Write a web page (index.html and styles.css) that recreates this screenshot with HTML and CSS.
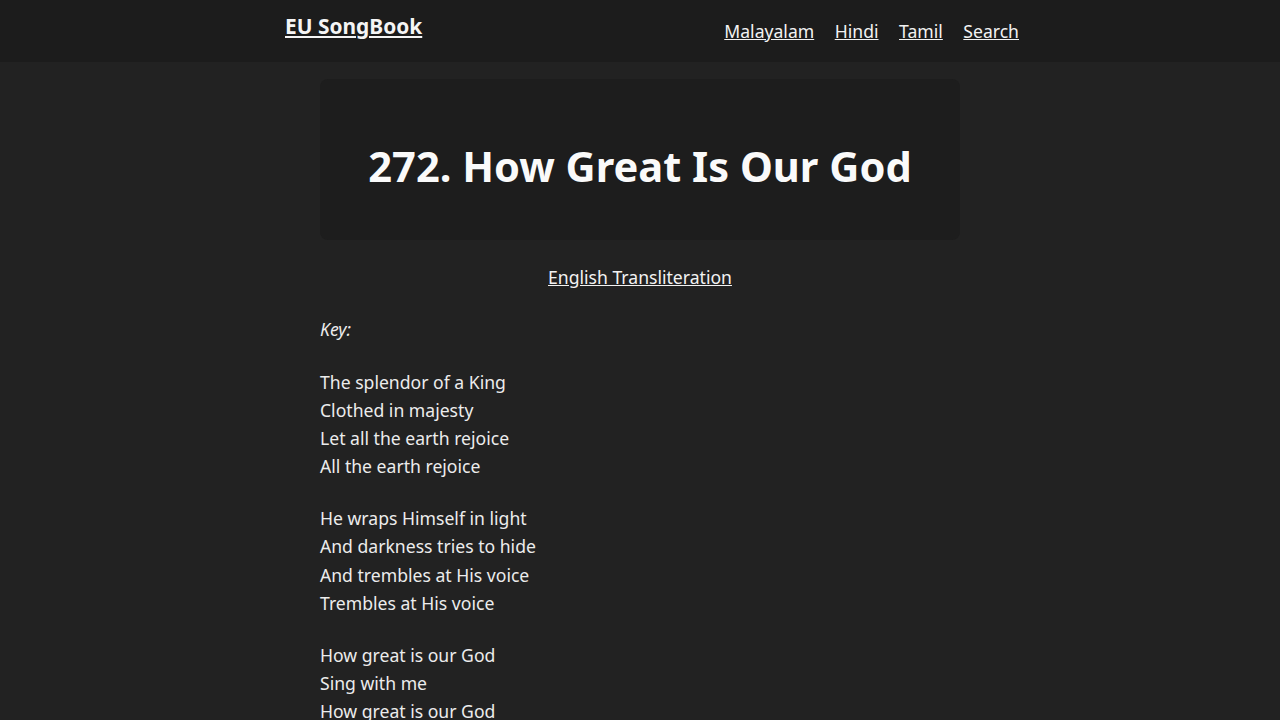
FILE: index.html
```html
<!DOCTYPE html>
<html lang="en">
<head>
<meta charset="utf-8">
<title>272. How Great Is Our God - EU SongBook</title>
<link rel="stylesheet" href="styles.css">
</head>
<body>
<header class="site-header">
  <div class="header-inner">
    <a class="brand" href="#">EU SongBook</a>
    <nav class="nav">
      <a href="#">Malayalam</a>
      <a href="#">Hindi</a>
      <a href="#">Tamil</a>
      <a href="#">Search</a>
    </nav>
  </div>
</header>
<main class="content">
  <div class="title-card">
    <h1>272. How Great Is Our God</h1>
  </div>
  <p class="translit"><a href="#">English Transliteration</a></p>
  <p class="key"><em>Key:</em></p>
  <p class="stanza">The splendor of a King<br>Clothed in majesty<br>Let all the earth rejoice<br>All the earth rejoice</p>
  <p class="stanza">He wraps Himself in light<br>And darkness tries to hide<br>And trembles at His voice<br>Trembles at His voice</p>
  <p class="stanza">How great is our God<br>Sing with me<br>How great is our God<br>And all will see<br>How great, how great<br>Is our God</p>
</main>
</body>
</html>
```
FILE: styles.css
```css
html, body {
  margin: 0;
  padding: 0;
}
body {
  background: #222222;
  color: #ececec;
  font-family: "Noto Sans", "Open Sans", sans-serif;
  font-size: 17.6px;
  line-height: 28.16px;
}
a {
  color: #f2f2f2;
}
.site-header {
  background: #1c1c1c;
  height: 62px;
}
.header-inner {
  width: 734px;
  margin: 0 0 0 285px;
  display: flex;
  justify-content: space-between;
  align-items: flex-start;
}
.brand {
  font-size: 20.9px;
  font-weight: 700;
  line-height: 30px;
  margin-top: 11px;
  color: #f5f5f5;
}
.nav {
  display: flex;
  gap: 20.5px;
  margin-top: 17px;
}
.nav a {
  font-size: 17.6px;
  line-height: 28px;
}
.content {
  width: 640px;
  margin: 17px auto 0;
}
.title-card {
  background: #1d1d1d;
  border-radius: 8px;
  height: 161px;
  box-sizing: border-box;
  padding-top: 12px;
  display: flex;
  align-items: center;
  justify-content: center;
}
.title-card h1 {
  margin: 0;
  font-size: 41.6px;
  line-height: 56px;
  font-weight: 700;
  color: #fafafa;
}
.translit {
  text-align: center;
  margin: 23px 0 0;
}
.key {
  margin: 24px 0 24.4px;
}
.stanza {
  margin: 24px 0 0;
}
```
